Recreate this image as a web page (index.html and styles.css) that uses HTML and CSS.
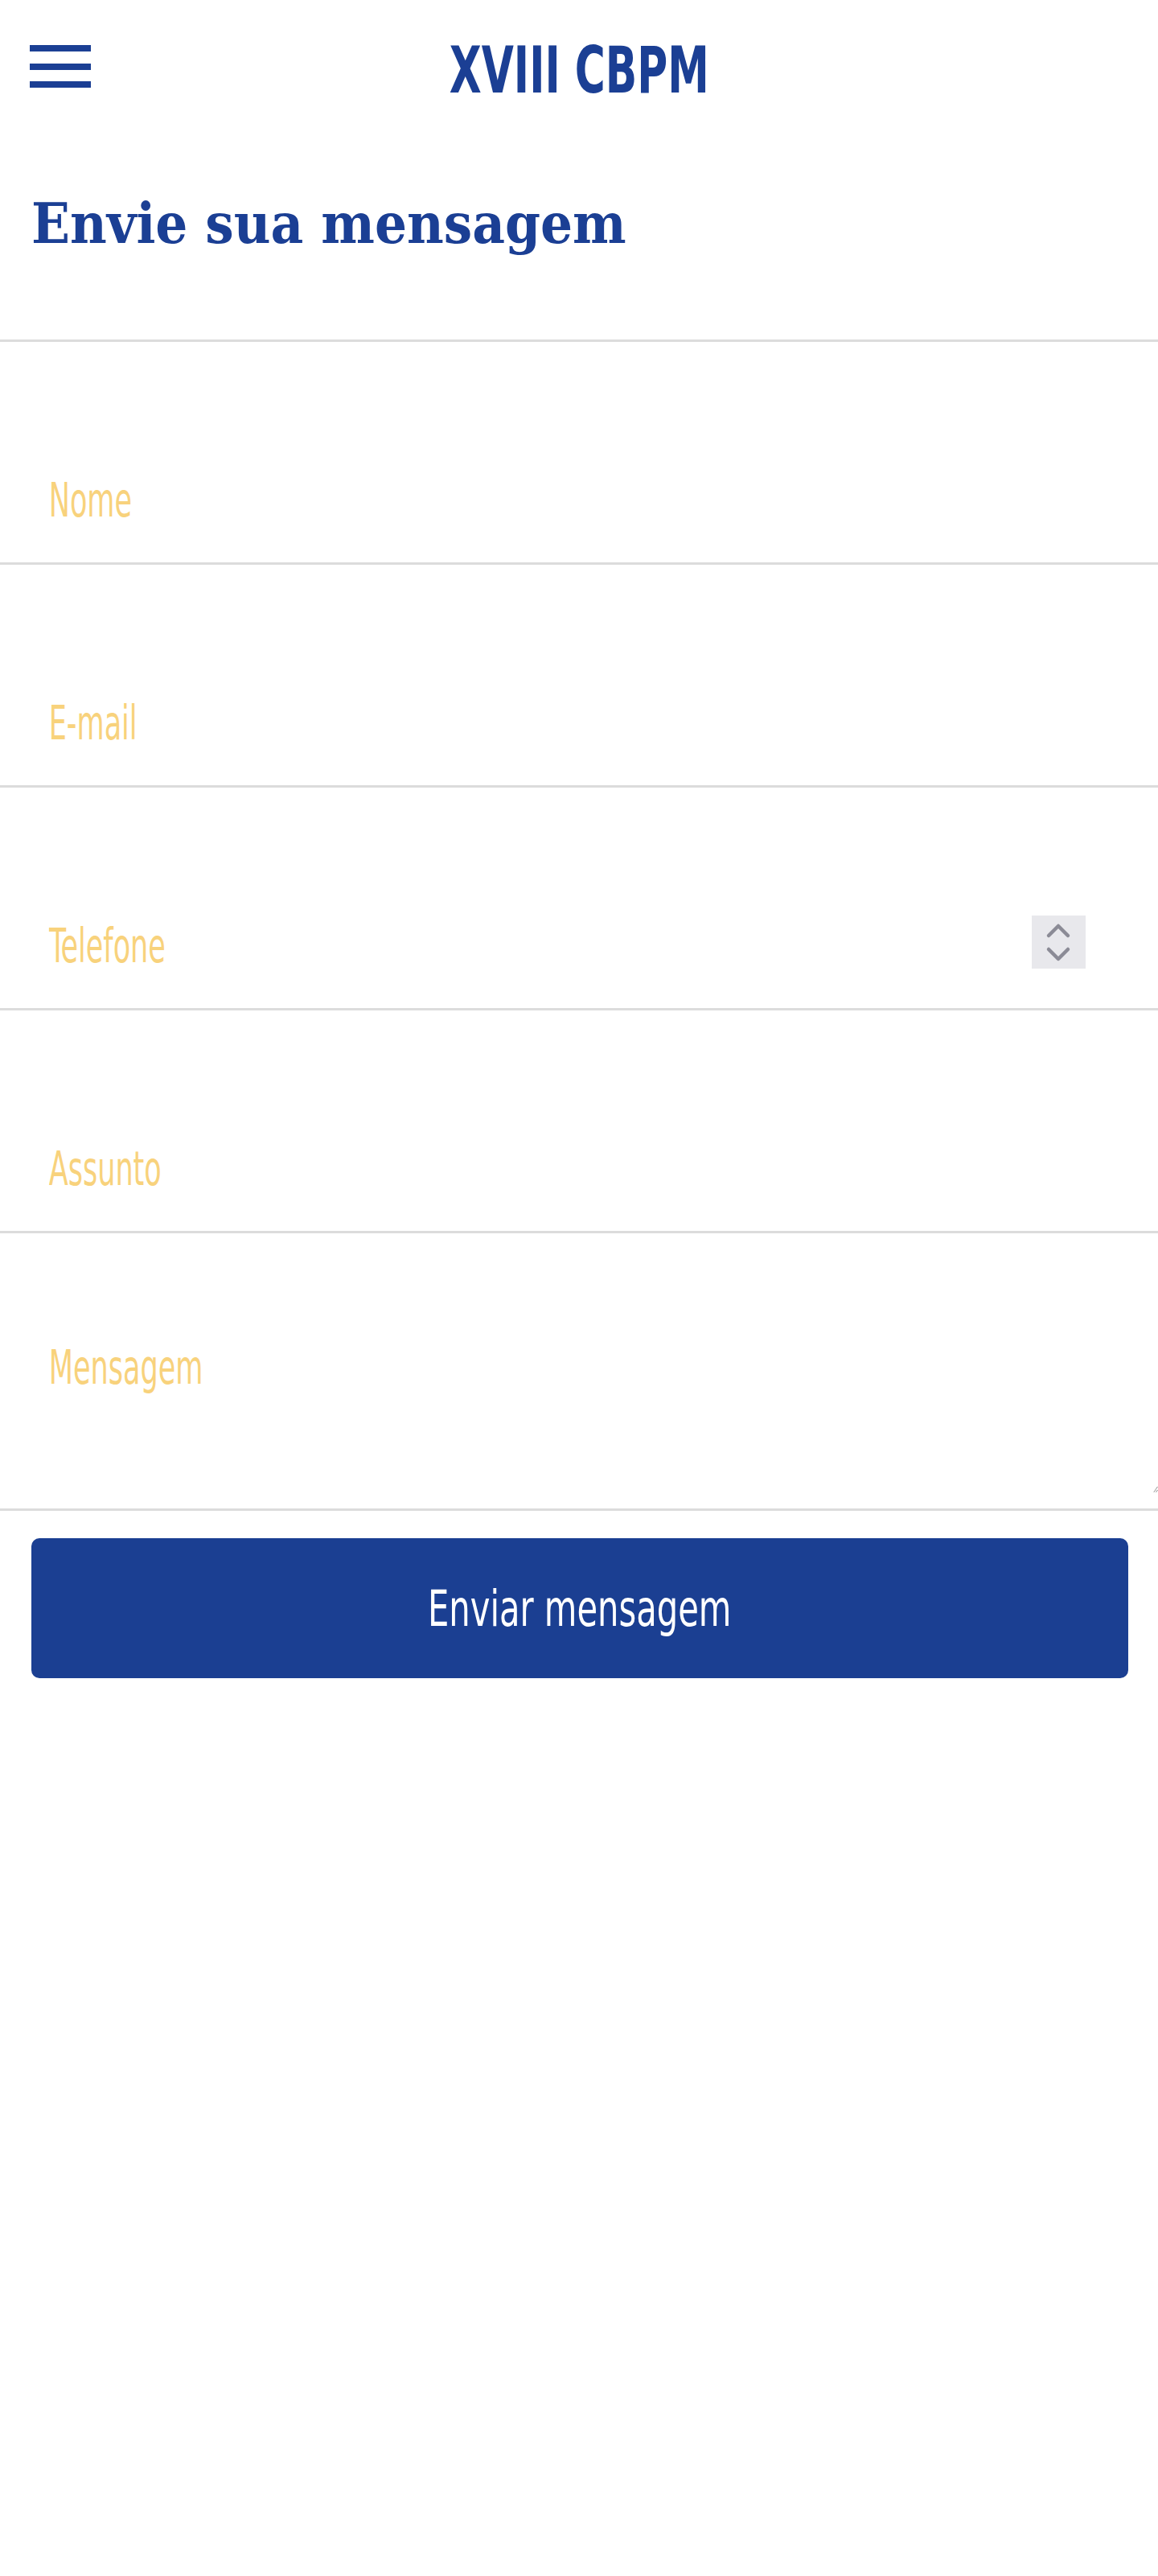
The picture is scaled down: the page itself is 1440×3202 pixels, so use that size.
FILE: index.html
```html
<!DOCTYPE html>
<html lang="pt-BR">
<head>
  <meta charset="UTF-8" />
  <title>Contato - XVIII CBPM</title>
  <link rel="stylesheet" href="styles.css">
</head>
<body>
  <header class="topbar">
    <button class="menu-btn" type="button" aria-label="Menu">
      <span></span>
      <span></span>
      <span></span>
    </button>
    <div class="brand"><span>XVIII CBPM</span></div>
    <div></div>
  </header>

  <div class="page-head">
    <h1>Envie sua mensagem</h1>
  </div>

  <form id="contact-form">
    <div class="field">
      <input type="text" name="nome" placeholder="Nome" />
    </div>
    <div class="field">
      <input type="email" name="email" placeholder="E-mail" />
    </div>
    <div class="field">
      <input type="text" name="telefone" inputmode="numeric" placeholder="Telefone" />
      <span class="spin">
        <svg width="67" height="66" viewBox="0 0 67 66">
          <rect width="67" height="66" fill="#e8e8ec" />
          <path d="M21 25 L33 13 L45 25" fill="none" stroke="#8b8b96" stroke-width="4.5" stroke-linecap="round" stroke-linejoin="round" />
          <path d="M21 42 L33 54 L45 42" fill="none" stroke="#8b8b96" stroke-width="4.5" stroke-linecap="round" stroke-linejoin="round" />
        </svg>
      </span>
    </div>
    <div class="field">
      <input type="text" name="assunto" placeholder="Assunto" />
    </div>
    <div class="field field-area">
      <textarea name="mensagem" placeholder="Mensagem"></textarea>
    </div>

    <div class="actions">
      <button type="submit" class="btn"><span>Enviar mensagem</span></button>
    </div>
  </form>

<script>
  const form = document.getElementById("contact-form");

  form.addEventListener("submit", (e) => {
    e.preventDefault();
    form.reset();
  });
</script>
</body>
</html>
```

FILE: styles.css
```css
* {
  box-sizing: border-box;
}

body {
  margin: 0;
  background: #fff;
  font-family: "DejaVu Sans Condensed", "DejaVu Sans", sans-serif;
}

.topbar {
  display: grid;
  grid-template-columns: 1fr auto 1fr;
  align-items: start;
  padding: 48px 37px 0;
}

.menu-btn {
  display: flex;
  flex-direction: column;
  gap: 14.5px;
  width: 76px;
  margin-top: 8px;
  padding: 0;
  border: none;
  background: none;
  cursor: pointer;
}

.menu-btn span {
  display: block;
  height: 8px;
  background: #1b3f94;
}

.brand {
  font-size: 80px;
  line-height: 1;
  font-weight: bold;
  color: #1b3f94;
}

.brand span {
  display: inline-block;
  transform: scaleX(0.72);
}

.page-head {
  padding: 108px 39px 102px;
  border-bottom: 3px solid #dcdcdc;
}

h1 {
  margin: 0;
  font-family: "DejaVu Serif Condensed", "DejaVu Serif", serif;
  font-size: 70px;
  line-height: 1.2;
  color: #1b3f94;
}

.field {
  position: relative;
  overflow: hidden;
  border-bottom: 3px solid #dcdcdc;
}

.field input,
.field textarea {
  display: block;
  width: calc(100% / 0.66);
  border: none;
  outline: none;
  background: transparent;
  font-family: inherit;
  font-size: 59px;
  color: #333;
  transform: scaleX(0.66);
  transform-origin: 0 0;
}

.field input {
  height: 274px;
  padding: 119px 92px 0;
}

.field-area {
  padding-bottom: 19px;
}

.field textarea {
  height: 323px;
  padding: 132px 92px 0;
  resize: vertical;
}

.field input::placeholder,
.field textarea::placeholder {
  color: #f8d27c;
}

.spin {
  position: absolute;
  top: 159px;
  right: 90px;
  display: block;
  line-height: 0;
}

.actions {
  padding: 34px 37px 0 39px;
}

.btn {
  display: block;
  width: 100%;
  height: 174px;
  border: none;
  border-radius: 10px;
  background: #1b3f92;
  color: #fff;
  font-family: inherit;
  font-size: 63px;
  cursor: pointer;
}

.btn span {
  display: inline-block;
  transform: scaleX(0.735);
}
```
